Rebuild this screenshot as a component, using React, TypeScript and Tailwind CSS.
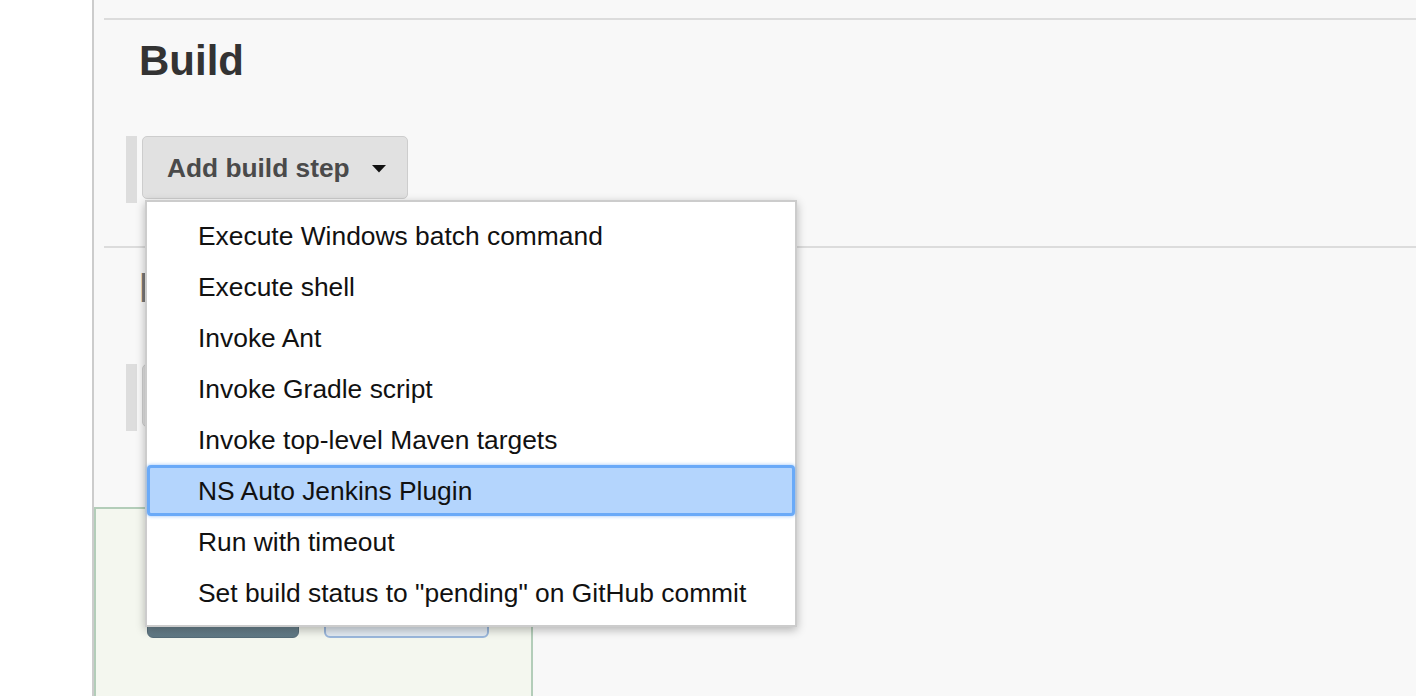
import React from 'react';

const items = [
  'Execute Windows batch command',
  'Execute shell',
  'Invoke Ant',
  'Invoke Gradle script',
  'Invoke top-level Maven targets',
  'NS Auto Jenkins Plugin',
  'Run with timeout',
  'Set build status to "pending" on GitHub commit',
];

const ACTIVE = 'NS Auto Jenkins Plugin';

function Caret() {
  return (
    <svg width="14" height="8" viewBox="0 0 14 8" className="shrink-0">
      <polygon points="0,0 14,0 7,7.5" fill="#111" />
    </svg>
  );
}

function StepButton({ label, children }: { label: string; children?: React.ReactNode }) {
  return (
    <div className="flex">
      <div className="w-[11px] h-[67px] bg-[#dddddd]" />
      <div className="relative ml-[5px]">
        <button className="flex items-center w-[266px] h-[63px] pt-[3px] pl-[24px] pr-[21px] rounded-[5px] border border-[#cdcdcd] bg-[#e1e1e1] text-[26.3px] font-bold text-[#4a4a4a]">
          <span>{label}</span>
          <span className="ml-auto">
            <Caret />
          </span>
        </button>
        {children}
      </div>
    </div>
  );
}

function Menu() {
  return (
    <ul className="absolute z-10 top-[64px] left-[3px] w-[652px] pt-[8px] pb-[7px] bg-white border-2 border-[#cccccc] shadow-[0_3px_9px_rgba(0,0,0,0.28)]">
      {items.map((item) =>
        item === ACTIVE ? (
          <li
            key={item}
            className="flex items-center h-[51px] pt-[2px] pl-[48px] rounded-[4px] border-[3px] border-[#6aaaf8] bg-[#b4d5fd] shadow-[0_0_3px_1px_rgba(106,170,248,0.45)] text-[26.4px] text-[#111]"
          >
            {item}
          </li>
        ) : (
          <li key={item} className="flex items-center h-[51px] pt-[2px] pl-[51px] text-[26.4px] text-[#111]">
            {item}
          </li>
        )
      )}
    </ul>
  );
}

export default function App() {
  return (
    <div
      className="flex w-[1416px] h-[696px] overflow-hidden bg-white"
      style={{ fontFamily: '"Liberation Sans", Arial, sans-serif' }}
    >
      <div className="w-[92px] shrink-0 bg-white" />
      <main className="relative flex-1 flex flex-col bg-[#f8f8f8] border-l-2 border-[#cccccc]">
        <div className="mt-[18px] ml-[10px] h-[2px] bg-[#dcdcdc]" />

        <section className="pl-[32px]">
          <h2 className="mt-[20px] ml-[13px] text-[42px] leading-[42px] font-bold text-[#333333]">Build</h2>
          <div className="mt-[54px]">
            <StepButton label="Add build step">
              <Menu />
            </StepButton>
          </div>
        </section>

        <div className="mt-[43px] ml-[10px] h-[2px] bg-[#dcdcdc]" />

        <section className="pl-[32px]">
          <h2 className="mt-[19px] ml-[13px] text-[42px] leading-[42px] font-bold text-[#777777]">
            Post-build Actions
          </h2>
          <div className="mt-[55px]">
            <StepButton label="Add post-build action" />
          </div>
        </section>

        <div className="mt-[76px] w-[439px] flex-1 border-t-2 border-r-2 border-l-2 border-[#b3cdb9] bg-[#f4f7ef]">
          <div className="mt-[73px] flex gap-[25px] pl-[51px]">
            <button className="w-[152px] h-[56px] rounded-[6px] border border-[#566d79] bg-gradient-to-b from-[#9fb2bc] to-[#5f7884] text-white text-[22px] font-bold">
              Save
            </button>
            <button className="w-[165px] h-[56px] rounded-[6px] border-2 border-[#9ab7dc] bg-[#e3ebf3] text-[#2f5b8f] text-[22px] font-bold">
              Apply
            </button>
          </div>
        </div>
      </main>
    </div>
  );
}
